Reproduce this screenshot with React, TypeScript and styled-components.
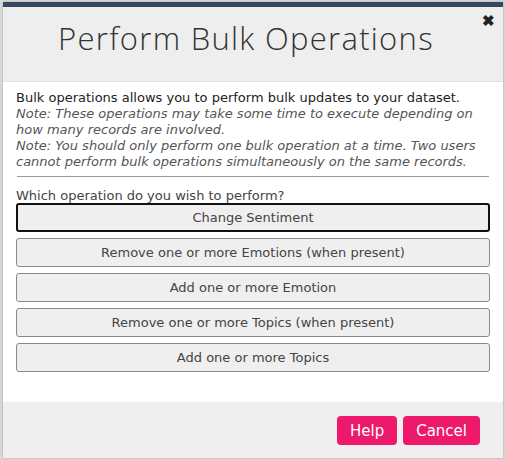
import React from 'react'
import styled, { createGlobalStyle } from 'styled-components'

const GlobalStyle = createGlobalStyle`
  html, body {
    margin: 0;
    padding: 0;
    background: #dcdcdc;
    font-family: "DejaVu Sans", "Open Sans", sans-serif;
  }
`

const Page = styled.div`
  width: 505px;
  height: 459px;
  padding: 2px 2px 1px 3px;
  box-sizing: border-box;
`

const Modal = styled.div`
  height: 100%;
  display: flex;
  flex-direction: column;
  background: #fff;
  border-top: 5px solid #34495e;
  box-shadow: 0 0 3px rgba(0, 0, 0, 0.25);
  box-sizing: border-box;
`

const Header = styled.div`
  position: relative;
  height: 75px;
  background: #eeeeee;
  border-bottom: 1px solid #e2e2e2;
  display: flex;
  justify-content: center;
  padding-top: 10px;
  box-sizing: border-box;
`

const Title = styled.h1`
  margin: 0 14px 0 0;
  font-family: "Open Sans", sans-serif;
  font-size: 31px;
  font-weight: 300;
  color: #333;
  letter-spacing: 1.3px;
`

const Close = styled.button`
  position: absolute;
  top: 5px;
  right: 8px;
  border: 0;
  background: none;
  padding: 0;
  font-size: 15px;
  font-weight: 700;
  color: #222;
  cursor: pointer;
`

const Body = styled.div`
  flex: 1;
  padding: 8px 13px 0 13px;
  color: #333;
  font-size: 13px;
`

const Lead = styled.p`
  margin: 0;
  line-height: 16px;
  color: #222;
`

const Note = styled.p`
  margin: 0;
  line-height: 16px;
  font-style: italic;
  color: #555;
`

const Rule = styled.hr`
  margin: 6px 1px 12px;
  border: 0;
  border-top: 1px solid #999;
`

const Question = styled.div`
  line-height: 14px;
  color: #444;
`

const Options = styled.div`
  display: flex;
  flex-direction: column;
  gap: 6px;
`

const Option = styled.button<{ $active?: boolean }>`
  height: 29px;
  width: 100%;
  background: #efefef;
  border: ${p => (p.$active ? '2px solid #111' : '1px solid #8a8a8a')};
  border-radius: 3px;
  font-family: inherit;
  font-size: 13px;
  color: #444;
  cursor: pointer;
`

const Footer = styled.div`
  height: 56px;
  background: #efefef;
  display: flex;
  justify-content: flex-end;
  align-items: flex-start;
  gap: 6px;
  padding: 14px 23px 0 0;
  box-sizing: border-box;
`

const Action = styled.button`
  height: 29px;
  padding: 0 13px;
  background: #ed1a6c;
  border: 0;
  border-radius: 4px;
  color: #fff;
  font-family: inherit;
  font-size: 15px;
  cursor: pointer;
`

const operations = [
  'Change Sentiment',
  'Remove one or more Emotions (when present)',
  'Add one or more Emotion',
  'Remove one or more Topics (when present)',
  'Add one or more Topics',
]

const App = () => {
  return (
    <>
      <GlobalStyle />
      <Page>
        <Modal>
          <Header>
            <Title>Perform Bulk Operations</Title>
            <Close>✖</Close>
          </Header>
          <Body>
            <Lead>Bulk operations allows you to perform bulk updates to your dataset.</Lead>
            <Note>
              Note: These operations may take some time to execute depending on how many records are
              involved.
            </Note>
            <Note>
              Note: You should only perform one bulk operation at a time. Two users cannot perform bulk
              operations simultaneously on the same records.
            </Note>
            <Rule />
            <Question>Which operation do you wish to perform?</Question>
            <Options>
              {operations.map((op, i) => (
                <Option key={op} $active={i === 0}>
                  {op}
                </Option>
              ))}
            </Options>
          </Body>
          <Footer>
            <Action>Help</Action>
            <Action>Cancel</Action>
          </Footer>
        </Modal>
      </Page>
    </>
  )
}

export default App
